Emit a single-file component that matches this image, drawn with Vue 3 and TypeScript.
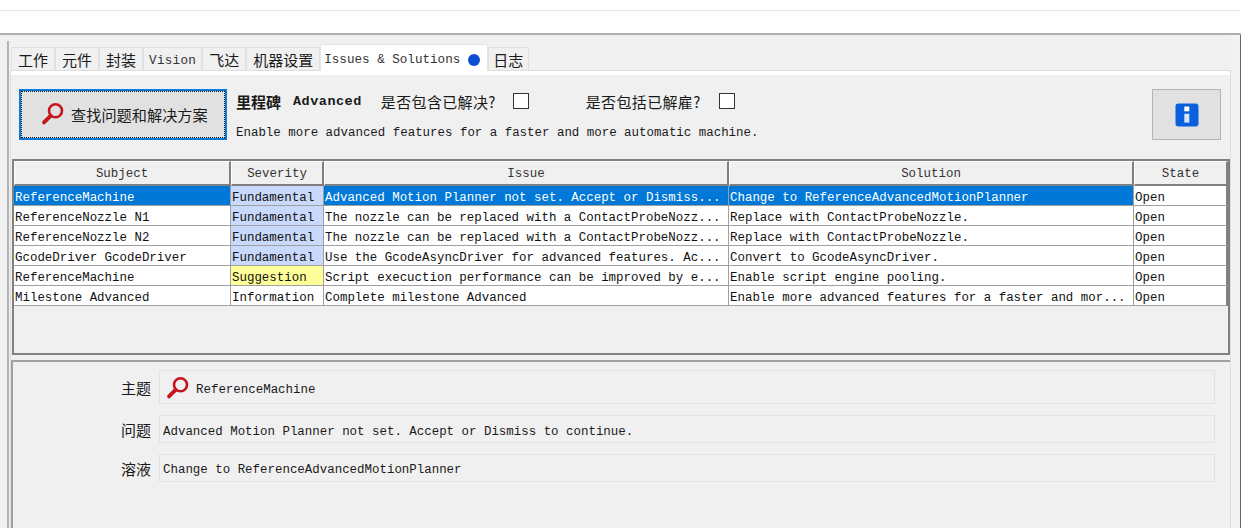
<script setup lang="ts">
interface Row {
  subject: string
  severity: string
  level: string
  issue: string
  solution: string
  state: string
}
const tabs = ['工作', '元件', '封装', 'Vision', '飞达', '机器设置']
const heads = ['Subject', 'Severity', 'Issue', 'Solution', 'State']
const rows: Row[] = [
  { subject: 'ReferenceMachine', severity: 'Fundamental', level: 'fund', issue: 'Advanced Motion Planner not set. Accept or Dismiss...', solution: 'Change to ReferenceAdvancedMotionPlanner', state: 'Open' },
  { subject: 'ReferenceNozzle N1', severity: 'Fundamental', level: 'fund', issue: 'The nozzle can be replaced with a ContactProbeNozz...', solution: 'Replace with ContactProbeNozzle.', state: 'Open' },
  { subject: 'ReferenceNozzle N2', severity: 'Fundamental', level: 'fund', issue: 'The nozzle can be replaced with a ContactProbeNozz...', solution: 'Replace with ContactProbeNozzle.', state: 'Open' },
  { subject: 'GcodeDriver GcodeDriver', severity: 'Fundamental', level: 'fund', issue: 'Use the GcodeAsyncDriver for advanced features. Ac...', solution: 'Convert to GcodeAsyncDriver.', state: 'Open' },
  { subject: 'ReferenceMachine', severity: 'Suggestion', level: 'sugg', issue: 'Script execuction performance can be improved by e...', solution: 'Enable script engine pooling.', state: 'Open' },
  { subject: 'Milestone Advanced', severity: 'Information', level: 'plain', issue: 'Complete milestone Advanced', solution: 'Enable more advanced features for a faster and mor...', state: 'Open' }
]
</script>

<template>
  <div class="page">
    <div class="topbar"></div>
    <div class="toolbar"></div>
    <div class="main">
      <div class="rail"></div>
      <div class="content">
        <div class="tabs">
          <div v-for="t in tabs" :key="t" class="tab" :class="{ latin: t === 'Vision' }">{{ t }}</div>
          <div class="tab active">Issues &amp; Solutions<span class="dot"></span></div>
          <div class="tab last">日志</div>
        </div>
        <div class="panel">
          <div class="controls">
            <button class="search">
              <svg class="lens" viewBox="0 0 24 24" width="24" height="24">
                <circle cx="15.5" cy="8.8" r="6.5" fill="none" stroke="#c4161c" stroke-width="2.6" />
                <path d="M10.6 13.8 4 20.4" stroke="#c4161c" stroke-width="3.8" stroke-linecap="round" />
              </svg>
              <span>查找问题和解决方案</span>
            </button>
            <div class="summary">
              <div class="filters">
                <b class="ms">里程碑</b><b class="ms-name mono">Advanced</b>
                <span class="opt first">是否包含已解决?</span><span class="check first-check"></span>
                <span class="opt second">是否包括已解雇?</span><span class="check second-check"></span>
              </div>
              <div class="desc mono">Enable more advanced features for a faster and more automatic machine.</div>
            </div>
            <button class="about">
              <svg viewBox="0 0 24 24" width="24" height="24">
                <rect x="0.5" y="0.5" width="23" height="23" rx="3" fill="#0a5fdc" />
                <rect x="9.3" y="3.5" width="5" height="4.8" fill="#fff" />
                <rect x="9.3" y="10.8" width="5" height="8.8" fill="#d9e6f8" />
              </svg>
            </button>
          </div>
          <div class="table">
            <div class="head">
              <div v-for="h in heads" :key="h" class="th mono">{{ h }}</div>
            </div>
            <div v-for="(r, i) in rows" :key="i" class="row mono" :class="{ selected: i === 0 }">
              <div class="td subject">{{ r.subject }}</div>
              <div class="td" :class="r.level">{{ r.severity }}</div>
              <div class="td issue">{{ r.issue }}</div>
              <div class="td solution">{{ r.solution }}</div>
              <div class="td">{{ r.state }}</div>
            </div>
          </div>
          <div class="detail">
            <div class="field">
              <label>主题</label>
              <div class="value tall mono">
                <svg viewBox="0 0 24 24" width="24" height="24">
                  <circle cx="15.5" cy="8.8" r="6.5" fill="none" stroke="#c4161c" stroke-width="2.6" />
                  <path d="M10.6 13.8 4 20.4" stroke="#c4161c" stroke-width="3.8" stroke-linecap="round" />
                </svg>
                <span>ReferenceMachine</span>
              </div>
            </div>
            <div class="field">
              <label>问题</label>
              <div class="value mono">Advanced Motion Planner not set. Accept or Dismiss to continue.</div>
            </div>
            <div class="field">
              <label>溶液</label>
              <div class="value mono">Change to ReferenceAdvancedMotionPlanner</div>
            </div>
          </div>
        </div>
      </div>
      <div class="side"></div>
    </div>
  </div>
</template>

<style>
html, body { margin: 0; background: #f0f0f0; }
</style>

<style scoped>
.page {
  width: 1241px;
  height: 528px;
  overflow: hidden;
  font-family: "Noto Sans CJK SC", sans-serif;
  font-size: 15px;
  color: #1a1a1a;
  background: #f0f0f0;
}
.mono { font-family: "Liberation Mono", "Noto Sans CJK SC", monospace; font-size: 12.45px; }
.topbar { height: 10px; background: #fff; border-bottom: 1px solid #e6e6e6; }
.toolbar { height: 22px; background: #fff; border-bottom: 2px solid #b0b0b0; }
.main { display: flex; height: 493px; }
.rail { width: 2px; margin: 6px 0 0 7px; background: #b4b4b4; flex: none; }
.content { width: 1222px; flex: none; padding-top: 9px; box-sizing: border-box; }
.side { flex: 1; background: #f3f3f3; border-right: 1px solid #5f6a75; }
.tabs { display: flex; height: 26px; align-items: flex-end; padding-left: 2px; position: relative; z-index: 1; }
.tab {
  height: 23px;
  line-height: 24px;
  padding: 0 6px;
  border: 1px solid #e0e0e0;
  border-bottom: none;
  background: #f0f0f0;
  box-sizing: border-box;
  white-space: nowrap;
}
.tab.last { padding: 0 5px 0 4px; }
.tab.latin {
  font-family: "Liberation Mono", monospace;
  font-size: 12.6px;
  letter-spacing: 0.3px;
  line-height: 26px;
  color: #333;
  padding: 0 5px;
}
.tab.active {
  height: 27px;
  margin-bottom: -1px;
  background: #fff;
  padding: 4px 7px 0 3px;
  display: flex;
  align-items: center;
  font-family: "Liberation Mono", monospace;
  font-size: 12.6px;
  color: #333;
  border-color: #e4e4e4;
}
.dot { width: 12px; height: 12px; border-radius: 50%; background: #0b4fd0; margin-left: 8px; }
.panel {
  margin-left: 1px;
  border: 1px solid #dedede;
  height: 460px;
  box-sizing: border-box;
}
.controls {
  display: flex;
  height: 88px;
  padding: 14px 9px 0 8px;
  box-sizing: border-box;
  border-top: 4px solid #fff;
}
.search {
  width: 208px;
  height: 51px;
  box-sizing: border-box;
  border: 2px solid #0a78d7;
  outline: 1px dotted #111;
  outline-offset: -3px;
  background: #e1e1e1;
  display: flex;
  align-items: center;
  padding: 0 0 2px 19px;
  font: inherit;
  font-size: 15.2px;
  color: inherit;
  gap: 7px;
  flex: none;
}
.lens { flex: none; }
.summary { margin-left: 9px; flex: 1; min-width: 0; }
.filters { display: flex; align-items: center; height: 24px; white-space: pre; }
.ms { font-size: 15px; font-weight: 700; }
.ms-name { font-weight: 700; font-size: 13.5px; letter-spacing: 0.5px; margin-left: 12px; }
.opt { letter-spacing: 0.35px; }
.opt.first { margin-left: 19px; }
.opt.second { margin-left: 57px; }
.check { width: 16px; height: 16px; box-sizing: border-box; border: 1px solid #333; background: #fff; }
.first-check { margin-left: 17px; }
.second-check { margin-left: 18px; }
.desc { margin-top: 13px; white-space: nowrap; }
.about {
  width: 69px;
  height: 51px;
  background: #e1e1e1;
  border: 1px solid #b4b4b4;
  padding: 0;
  display: flex;
  align-items: center;
  justify-content: center;
  flex: none;
}
.table {
  width: 1218px;
  height: 196px;
  box-sizing: border-box;
  margin-left: 1px;
  border: 2px solid #808080;
  background: #f0f0f0;
}
.head, .row { display: grid; grid-template-columns: 217px 93px 405px 405px 94px; }
.th {
  height: 25px;
  line-height: 24px;
  text-align: center;
  box-sizing: border-box;
  border: 1px solid #fff;
  border-right: 2px solid #808080;
  border-bottom: 2px solid #808080;
  color: #333;
}
.row { height: 20px; background: #fff; color: #111; }
.td {
  height: 20px;
  line-height: 19px;
  box-sizing: border-box;
  padding: 3px 0 0 1px;
  border-right: 1px solid #a0a0a0;
  border-bottom: 1px solid #a0a0a0;
  white-space: nowrap;
  overflow: hidden;
}
.td:last-child { border-right: 2px solid #808080; }
.fund { background: #c8d9fb; }
.sugg { background: #ffff99; }
.plain { background: #fff; }
.row.selected .subject, .row.selected .issue, .row.selected .solution { background: #0078d7; color: #fff; }
.detail {
  margin: 5px 0 0 0;
  width: 1219px;
  height: 168px;
  box-sizing: border-box;
  border-top: 2px solid #a0a0a0;
  border-left: 2px solid #a0a0a0;
  padding-top: 8px;
}
.field { display: flex; align-items: center; margin-bottom: 11px; }
.field label { width: 138px; text-align: right; box-sizing: border-box; flex: none; }
.value {
  margin-left: 8px;
  width: 1056px;
  height: 28px;
  box-sizing: border-box;
  border: 1px solid #e2e2e2;
  padding: 6px 0 0 3px;
  display: flex;
  align-items: center;
  white-space: pre;
}
.field:last-child .value { padding-top: 4px; }
.value.tall { height: 34px; padding-left: 5px; }
.value.tall svg { margin: -5px 7px 0 0; flex: none; }
</style>
